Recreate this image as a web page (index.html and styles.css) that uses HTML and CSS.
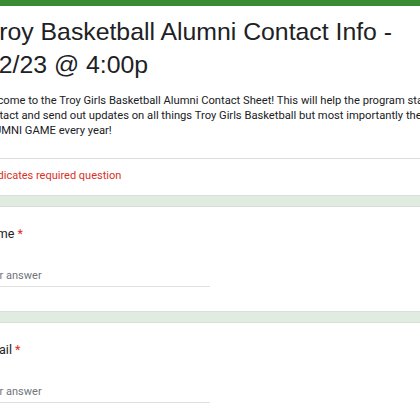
FILE: index.html
```html
<!DOCTYPE html>
<html lang="en">
<head>
    <meta charset="UTF-8">
    <meta name="viewport" content="width=device-width, initial-scale=1.0">
    <title>Troy Basketball Alumni Contact Info</title>
    <link rel="stylesheet" href="styles.css">
</head>
<body>
    <div class="form-page">
        <div class="card header-card">
            <div class="header-main">
                <h1 class="form-title">Troy Basketball Alumni Contact Info - 12/23 @ 4:00p</h1>
                <p class="form-desc">Welcome to the Troy Girls Basketball Alumni Contact Sheet! This will help the program stay in contact and send out updates on all things Troy Girls Basketball but most importantly the ALUMNI GAME every year!</p>
            </div>
            <div class="required-note">* Indicates required question</div>
        </div>

        <div class="card question">
            <div class="question-label">Name <span class="star">*</span></div>
            <div class="answer">Your answer</div>
        </div>

        <div class="card question">
            <div class="question-label">Email <span class="star">*</span></div>
            <div class="answer">Your answer</div>
        </div>
    </div>
</body>
</html>
```

FILE: styles.css
```css
body {
    margin: 0;
    background-color: #e1ece0;
    font-family: Roboto, "Liberation Sans", sans-serif;
    color: #202124;
    overflow: hidden;
}

.form-page {
    display: flex;
    flex-direction: column;
    gap: 10px;
    width: 515px;
    margin-left: -44px;
}

.card {
    background-color: white;
    border: 1px solid #dadce0;
    border-radius: 8px;
}

.header-card {
    border-top: 6px solid #3b8a34;
}

.header-main {
    padding: 9px 24px 20px 24px;
    border-bottom: 1px solid #dadce0;
}

.form-title {
    margin: 0 0 12px 4px;
    font-family: "Liberation Sans", Arial, sans-serif;
    font-weight: normal;
    font-size: 24.8px;
    line-height: 33px;
}

.form-desc {
    margin: 0;
    font-size: 11.2px;
    line-height: 15px;
    text-indent: -2px;
}

.required-note {
    padding: 9px 24px 12px 24px;
    font-size: 11px;
    line-height: 15px;
    color: #d93025;
}

.question {
    padding: 19px 24px 24px 24px;
}

.question-label {
    font-size: 12.5px;
    line-height: 16px;
    margin-bottom: 26px;
}

.star {
    color: #d93025;
}

.answer {
    width: 229px;
    font-size: 11px;
    line-height: 15px;
    color: #70757a;
    padding-bottom: 3px;
    border-bottom: 1px solid #e0e0e0;
}
```
